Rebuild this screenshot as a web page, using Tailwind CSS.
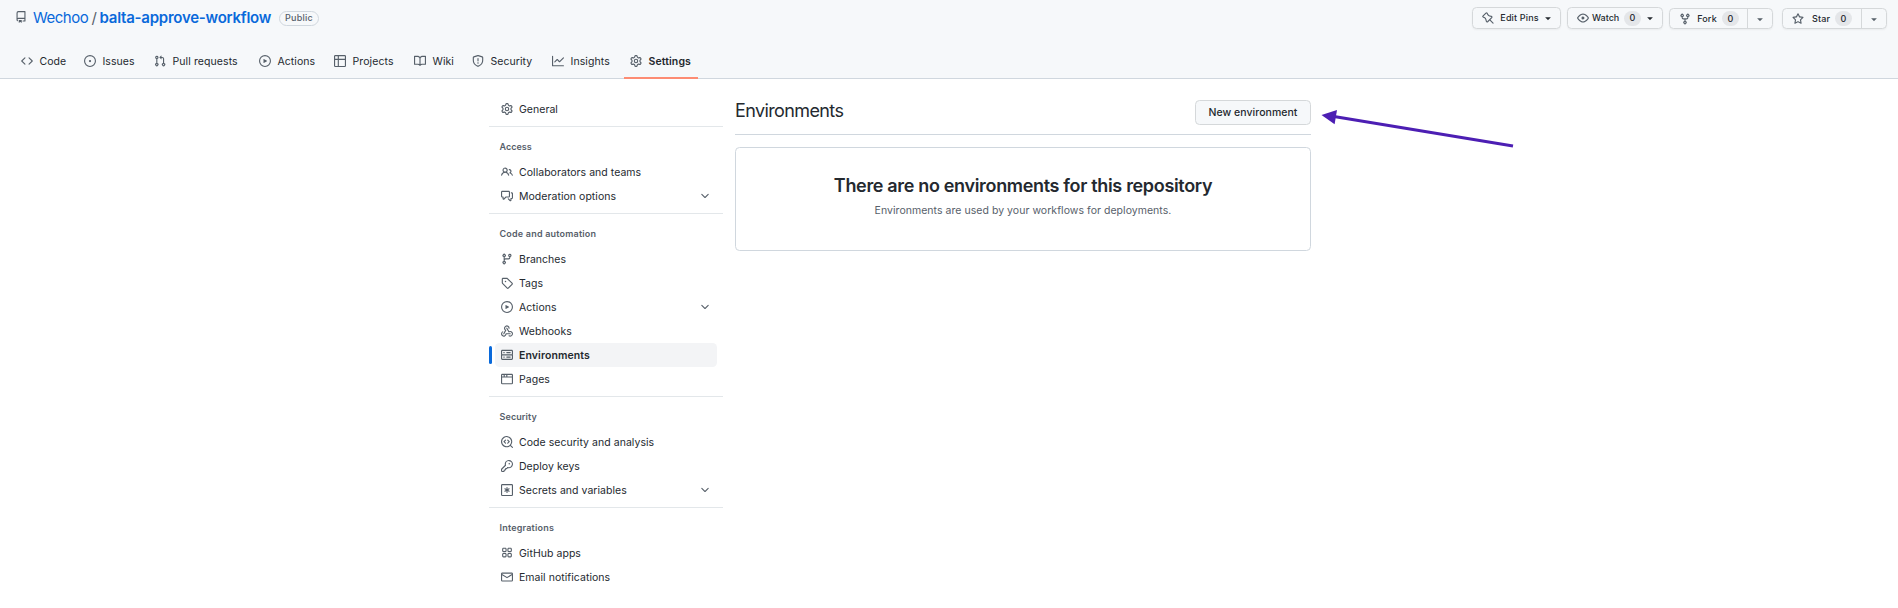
<!DOCTYPE html>
<html lang="en">
<head>
<meta charset="utf-8">
<title>Environments · Wechoo/balta-approve-workflow</title>
<script src="https://cdn.jsdelivr.net/npm/@tailwindcss/browser@4"></script>
</head>
<body class="h-[608px] overflow-hidden bg-white font-['Inter','Liberation_Sans',sans-serif] text-[10.5px] leading-4 tracking-[0.04px] text-[#24292f]">
<svg class="hidden">
  <symbol id="repo" viewBox="0 0 16 16"><path d="M2 2.5A2.5 2.5 0 0 1 4.5 0h8.75a.75.75 0 0 1 .75.75v12.5a.75.75 0 0 1-.75.75h-2.5a.75.75 0 0 1 0-1.5h1.75v-2h-8a1 1 0 0 0-.714 1.7.75.75 0 1 1-1.072 1.05A2.495 2.495 0 0 1 2 11.5Zm10.5-1h-8a1 1 0 0 0-1 1v6.708A2.486 2.486 0 0 1 4.5 9h8ZM5 12.25a.25.25 0 0 1 .25-.25h3.5a.25.25 0 0 1 .25.25v3.25a.25.25 0 0 1-.4.2l-1.45-1.087a.249.249 0 0 0-.3 0L5.4 15.7a.25.25 0 0 1-.4-.2Z"/></symbol>
  <symbol id="code" viewBox="0 0 16 16"><path d="m11.28 3.22 4.25 4.25a.75.75 0 0 1 0 1.06l-4.25 4.25a.749.749 0 0 1-1.275-.326.749.749 0 0 1 .215-.734L13.94 8l-3.72-3.72a.749.749 0 0 1 .326-1.275.749.749 0 0 1 .734.215Zm-6.56 0a.751.751 0 0 1 1.042.018.751.751 0 0 1 .018 1.042L2.06 8l3.72 3.72a.749.749 0 0 1-.326 1.275.749.749 0 0 1-.734-.215L.47 8.53a.75.75 0 0 1 0-1.06Z"/></symbol>
  <symbol id="issue" viewBox="0 0 16 16"><path d="M8 9.5a1.5 1.5 0 1 0 0-3 1.5 1.5 0 0 0 0 3Z"/><path d="M8 0a8 8 0 1 1 0 16A8 8 0 0 1 8 0ZM1.5 8a6.5 6.5 0 1 0 13 0 6.5 6.5 0 0 0-13 0Z"/></symbol>
  <symbol id="pr" viewBox="0 0 16 16"><path d="M1.5 3.25a2.25 2.25 0 1 1 3 2.122v5.256a2.251 2.251 0 1 1-1.5 0V5.372A2.25 2.25 0 0 1 1.5 3.25Zm5.677-.177L9.573.677A.25.25 0 0 1 10 .854V2.5h1A2.5 2.5 0 0 1 13.5 5v5.628a2.251 2.251 0 1 1-1.5 0V5a1 1 0 0 0-1-1h-1v1.646a.25.25 0 0 1-.427.177L7.177 3.427a.25.25 0 0 1 0-.354ZM3.75 2.5a.75.75 0 1 0 0 1.5.75.75 0 0 0 0-1.5Zm0 9.5a.75.75 0 1 0 0 1.5.75.75 0 0 0 0-1.5Zm8.25.75a.75.75 0 1 0 1.5 0 .75.75 0 0 0-1.5 0Z"/></symbol>
  <symbol id="play" viewBox="0 0 16 16"><path d="M8 0a8 8 0 1 1 0 16A8 8 0 0 1 8 0ZM1.5 8a6.5 6.5 0 1 0 13 0 6.5 6.5 0 0 0-13 0Zm4.879-2.773 4.264 2.559a.25.25 0 0 1 0 .428l-4.264 2.559A.25.25 0 0 1 6 10.559V5.442a.25.25 0 0 1 .379-.215Z"/></symbol>
  <symbol id="table" viewBox="0 0 16 16"><path d="M0 1.75C0 .784.784 0 1.75 0h12.5C15.216 0 16 .784 16 1.75v12.5A1.75 1.75 0 0 1 14.25 16H1.75A1.75 1.75 0 0 1 0 14.25ZM6.5 6.5v8h7.75a.25.25 0 0 0 .25-.25V6.5Zm8-1.5V1.75a.25.25 0 0 0-.25-.25H6.5V5Zm-13 1.5v7.75c0 .138.112.25.25.25H5v-8ZM5 5V1.5H1.75a.25.25 0 0 0-.25.25V5Z"/></symbol>
  <symbol id="book" viewBox="0 0 16 16"><path d="M0 1.75A.75.75 0 0 1 .75 1h4.253c1.227 0 2.317.59 3 1.501A3.743 3.743 0 0 1 11.006 1h4.245a.75.75 0 0 1 .75.75v10.5a.75.75 0 0 1-.75.75h-4.507a2.25 2.25 0 0 0-1.591.659l-.622.621a.75.75 0 0 1-1.06 0l-.622-.621A2.25 2.25 0 0 0 5.258 13H.75a.75.75 0 0 1-.75-.75Zm7.251 10.324.004-5.073-.002-2.253A2.25 2.25 0 0 0 5.003 2.5H1.5v9h3.757a3.75 3.75 0 0 1 1.994.574ZM8.755 4.75l-.004 7.322a3.752 3.752 0 0 1 1.992-.572H14.5v-9h-3.495a2.25 2.25 0 0 0-2.25 2.25Z"/></symbol>
  <symbol id="shield" viewBox="0 0 16 16"><path d="M7.467.133a1.748 1.748 0 0 1 1.066 0l5.25 1.68A1.75 1.75 0 0 1 15 3.48V7c0 1.566-.32 3.182-1.303 4.682-.983 1.498-2.585 2.813-5.032 3.855a1.697 1.697 0 0 1-1.33 0c-2.447-1.042-4.049-2.357-5.032-3.855C1.32 10.182 1 8.566 1 7V3.48a1.75 1.75 0 0 1 1.217-1.667Zm.61 1.429a.25.25 0 0 0-.153 0l-5.25 1.68a.25.25 0 0 0-.174.238V7c0 1.358.275 2.666 1.057 3.86.784 1.194 2.121 2.34 4.366 3.297a.196.196 0 0 0 .154 0c2.245-.956 3.582-2.104 4.366-3.298C13.225 9.666 13.5 8.36 13.5 7V3.48a.251.251 0 0 0-.174-.237l-5.25-1.68ZM8.75 4.75v3a.75.75 0 0 1-1.5 0v-3a.75.75 0 0 1 1.5 0ZM9 10.5a1 1 0 1 1-2 0 1 1 0 0 1 2 0Z"/></symbol>
  <symbol id="graph" viewBox="0 0 16 16"><path d="M1.5 1.75V13.5h13.75a.75.75 0 0 1 0 1.5H.75a.75.75 0 0 1-.75-.75V1.75a.75.75 0 0 1 1.5 0Zm14.28 2.53-5.25 5.25a.75.75 0 0 1-1.06 0L7 7.06 4.28 9.78a.751.751 0 0 1-1.042-.018.751.751 0 0 1-.018-1.042l3.25-3.25a.75.75 0 0 1 1.06 0L10 7.94l4.72-4.72a.751.751 0 0 1 1.042.018.751.751 0 0 1 .018 1.042Z"/></symbol>
  <symbol id="gear" viewBox="0 0 16 16"><path d="M8 0a8.2 8.2 0 0 1 .701.031C9.444.095 9.99.645 10.16 1.29l.288 1.107c.018.066.079.158.212.224.231.114.454.243.668.386.123.082.233.09.299.071l1.103-.303c.644-.176 1.392.021 1.82.63.27.385.506.792.704 1.218.315.675.111 1.422-.364 1.891l-.814.806c-.049.048-.098.147-.088.294.016.257.016.515 0 .772-.01.147.038.246.088.294l.814.806c.475.469.679 1.216.364 1.891a7.977 7.977 0 0 1-.704 1.217c-.428.61-1.176.807-1.82.63l-1.102-.302c-.067-.019-.177-.011-.3.071a5.909 5.909 0 0 1-.668.386c-.133.066-.194.158-.211.224l-.29 1.106c-.168.646-.715 1.196-1.458 1.26a8.006 8.006 0 0 1-1.402 0c-.743-.064-1.289-.614-1.458-1.26l-.289-1.106c-.018-.066-.079-.158-.212-.224a5.738 5.738 0 0 1-.668-.386c-.123-.082-.233-.09-.299-.071l-1.103.303c-.644.176-1.392-.021-1.82-.63a8.12 8.12 0 0 1-.704-1.218c-.315-.675-.111-1.422.363-1.891l.815-.806c.05-.048.098-.147.088-.294a6.214 6.214 0 0 1 0-.772c.01-.147-.038-.246-.088-.294l-.815-.806C.635 6.045.431 5.298.746 4.623a7.92 7.92 0 0 1 .704-1.217c.428-.61 1.176-.807 1.82-.63l1.102.302c.067.019.177.011.3-.071.214-.143.437-.272.668-.386.133-.066.194-.158.211-.224l.29-1.106C6.009.645 6.556.095 7.299.03 7.53.01 7.764 0 8 0Zm-.571 1.525c-.036.003-.108.036-.137.146l-.289 1.105c-.147.561-.549.967-.998 1.189-.173.086-.34.183-.5.29-.417.278-.97.423-1.529.27l-1.103-.303c-.109-.03-.175.016-.195.045-.22.312-.412.644-.573.99-.014.031-.021.11.059.19l.815.806c.411.406.562.957.53 1.456a4.709 4.709 0 0 0 0 .582c.032.499-.119 1.05-.53 1.456l-.815.806c-.081.08-.073.159-.059.19.162.346.353.677.573.989.02.03.085.076.195.046l1.102-.303c.56-.153 1.113-.008 1.53.27.161.107.328.204.501.29.447.222.85.629.997 1.189l.289 1.105c.029.109.101.143.137.146a6.6 6.6 0 0 0 1.142 0c.036-.003.108-.036.137-.146l.289-1.105c.147-.561.549-.967.998-1.189.173-.086.34-.183.5-.29.417-.278.97-.423 1.529-.27l1.103.303c.109.029.175-.016.195-.045.22-.313.411-.644.573-.99.014-.031.021-.11-.059-.19l-.815-.806c-.411-.406-.562-.957-.53-1.456a4.709 4.709 0 0 0 0-.582c-.032-.499.119-1.05.53-1.456l.815-.806c.081-.08.073-.159.059-.19a6.464 6.464 0 0 0-.573-.989c-.02-.03-.085-.076-.195-.046l-1.102.303c-.56.153-1.113.008-1.53-.27a4.44 4.44 0 0 0-.501-.29c-.447-.222-.85-.629-.997-1.189l-.289-1.105c-.029-.11-.101-.143-.137-.146a6.6 6.6 0 0 0-1.142 0ZM11 8a3 3 0 1 1-6 0 3 3 0 0 1 6 0ZM9.5 8a1.5 1.5 0 1 0-3.001.001A1.5 1.5 0 0 0 9.5 8Z"/></symbol>
  <symbol id="pin" viewBox="0 0 16 16"><path d="m11.294.984 3.722 3.722a1.75 1.75 0 0 1-.504 2.826l-1.327.613a3.089 3.089 0 0 0-1.707 2.084l-.584 2.454c-.317 1.332-1.972 1.8-2.94.832L5.75 11.311 1.78 15.28a.749.749 0 1 1-1.06-1.06l3.969-3.97-2.204-2.204c-.968-.968-.5-2.623.832-2.94l2.454-.584a3.08 3.08 0 0 0 2.084-1.707l.613-1.327a1.75 1.75 0 0 1 2.826-.504ZM6.283 9.723l2.732 2.731a.25.25 0 0 0 .42-.119l.584-2.454a4.586 4.586 0 0 1 2.537-3.098l1.328-.613a.25.25 0 0 0 .072-.404l-3.722-3.722a.25.25 0 0 0-.404.072l-.613 1.328a4.584 4.584 0 0 1-3.098 2.537l-2.454.584a.25.25 0 0 0-.119.42l2.731 2.732Z"/></symbol>
  <symbol id="eye" viewBox="0 0 16 16"><path d="M8 2c1.981 0 3.671.992 4.933 2.078 1.27 1.091 2.187 2.345 2.637 3.023a1.62 1.62 0 0 1 0 1.798c-.45.678-1.367 1.932-2.637 3.023C11.67 13.008 9.981 14 8 14c-1.981 0-3.671-.992-4.933-2.078C1.797 10.83.88 9.576.43 8.898a1.62 1.62 0 0 1 0-1.798c.45-.677 1.367-1.931 2.637-3.022C4.33 2.992 6.019 2 8 2ZM1.679 7.932a.12.12 0 0 0 0 .136c.411.622 1.241 1.75 2.366 2.717C5.176 11.758 6.527 12.5 8 12.5c1.473 0 2.825-.742 3.955-1.715 1.124-.967 1.954-2.096 2.366-2.717a.12.12 0 0 0 0-.136c-.412-.621-1.242-1.75-2.366-2.717C10.824 4.242 9.473 3.5 8 3.5c-1.473 0-2.825.742-3.955 1.715-1.124.967-1.954 2.096-2.366 2.717ZM8 10a2 2 0 1 1-.001-3.999A2 2 0 0 1 8 10Z"/></symbol>
  <symbol id="fork" viewBox="0 0 16 16"><path d="M5 5.372v.878c0 .414.336.75.75.75h4.5a.75.75 0 0 0 .75-.75v-.878a2.25 2.25 0 1 1 1.5 0v.878a2.25 2.25 0 0 1-2.25 2.25h-1.5v2.128a2.251 2.251 0 1 1-1.5 0V8.5h-1.5A2.25 2.25 0 0 1 3.5 6.25v-.878a2.25 2.25 0 1 1 1.5 0ZM5 3.25a.75.75 0 1 0-1.5 0 .75.75 0 0 0 1.5 0Zm6.75.75a.75.75 0 1 0 0-1.5.75.75 0 0 0 0 1.5Zm-3 8.75a.75.75 0 1 0-1.5 0 .75.75 0 0 0 1.5 0Z"/></symbol>
  <symbol id="star" viewBox="0 0 16 16"><path d="M8 .25a.75.75 0 0 1 .673.418l1.882 3.815 4.21.612a.75.75 0 0 1 .416 1.279l-3.046 2.97.719 4.192a.751.751 0 0 1-1.088.791L8 12.347l-3.766 1.98a.75.75 0 0 1-1.088-.79l.72-4.194L.818 6.374a.75.75 0 0 1 .416-1.28l4.21-.611L7.327.668A.75.75 0 0 1 8 .25Zm0 2.445L6.615 5.5a.75.75 0 0 1-.564.41l-3.097.45 2.24 2.184a.75.75 0 0 1 .216.664l-.528 3.084 2.769-1.456a.75.75 0 0 1 .698 0l2.77 1.456-.53-3.084a.75.75 0 0 1 .216-.664l2.24-2.183-3.096-.45a.75.75 0 0 1-.564-.41L8 2.694Z"/></symbol>
  <symbol id="caret" viewBox="0 0 16 16"><path d="m4.427 7.427 3.396 3.396a.25.25 0 0 0 .354 0l3.396-3.396A.25.25 0 0 0 11.396 7H4.604a.25.25 0 0 0-.177.427Z"/></symbol>
  <symbol id="people" viewBox="0 0 16 16"><path d="M2 5.5a3.5 3.5 0 1 1 5.898 2.549 5.508 5.508 0 0 1 3.034 4.084.75.75 0 1 1-1.482.235 4 4 0 0 0-7.9 0 .75.75 0 0 1-1.482-.236A5.507 5.507 0 0 1 3.102 8.05 3.493 3.493 0 0 1 2 5.5ZM11 4a3.001 3.001 0 0 1 2.22 5.018 5.01 5.01 0 0 1 2.56 3.012.749.749 0 0 1-.885.954.752.752 0 0 1-.549-.514 3.507 3.507 0 0 0-2.522-2.372.75.75 0 0 1-.574-.73v-.352a.75.75 0 0 1 .416-.672A1.5 1.5 0 0 0 11 5.5.75.75 0 0 1 11 4Zm-5.5-.5a2 2 0 1 0-.001 3.999A2 2 0 0 0 5.5 3.5Z"/></symbol>
  <symbol id="discuss" viewBox="0 0 16 16"><path d="M1.75 1h8.5c.966 0 1.75.784 1.75 1.75v5.5A1.75 1.75 0 0 1 10.25 10H7.061l-2.574 2.573A1.458 1.458 0 0 1 2 11.543V10h-.25A1.75 1.75 0 0 1 0 8.25v-5.5C0 1.784.784 1 1.75 1ZM1.5 2.75v5.5c0 .138.112.25.25.25h1a.75.75 0 0 1 .75.75v2.19l2.72-2.72a.749.749 0 0 1 .53-.22h3.5a.25.25 0 0 0 .25-.25v-5.5a.25.25 0 0 0-.25-.25h-8.5a.25.25 0 0 0-.25.25Zm13 2a.25.25 0 0 0-.25-.25h-.5a.75.75 0 0 1 0-1.5h.5c.966 0 1.75.784 1.75 1.75v5.5A1.75 1.75 0 0 1 14.25 12H14v1.543a1.458 1.458 0 0 1-2.487 1.03L9.22 12.28a.749.749 0 0 1 .326-1.275.749.749 0 0 1 .734.215l2.22 2.22v-2.19a.75.75 0 0 1 .75-.75h1a.25.25 0 0 0 .25-.25Z"/></symbol>
  <symbol id="chev" viewBox="0 0 16 16"><path d="M12.78 5.22a.749.749 0 0 1 0 1.06l-4.25 4.25a.749.749 0 0 1-1.06 0L3.22 6.28a.749.749 0 1 1 1.06-1.06L8 8.939l3.72-3.719a.749.749 0 0 1 1.06 0Z"/></symbol>
  <symbol id="branch" viewBox="0 0 16 16"><path d="M9.5 3.25a2.25 2.25 0 1 1 3 2.122V6A2.5 2.5 0 0 1 10 8.5H6a1 1 0 0 0-1 1v1.128a2.251 2.251 0 1 1-1.5 0V5.372a2.25 2.25 0 1 1 1.5 0v1.836A2.493 2.493 0 0 1 6 7h4a1 1 0 0 0 1-1v-.628A2.25 2.25 0 0 1 9.5 3.25Zm-6 0a.75.75 0 1 0 1.5 0 .75.75 0 0 0-1.5 0Zm8.25-.75a.75.75 0 1 0 0 1.5.75.75 0 0 0 0-1.5ZM4.25 12a.75.75 0 1 0 0 1.5.75.75 0 0 0 0-1.5Z"/></symbol>
  <symbol id="tag" viewBox="0 0 16 16"><path d="M1 7.775V2.75C1 1.784 1.784 1 2.75 1h5.025c.464 0 .91.184 1.238.513l6.25 6.25a1.75 1.75 0 0 1 0 2.474l-5.026 5.026a1.75 1.75 0 0 1-2.474 0l-6.25-6.25A1.752 1.752 0 0 1 1 7.775Zm1.5 0c0 .066.026.13.073.177l6.25 6.25a.25.25 0 0 0 .354 0l5.025-5.025a.25.25 0 0 0 0-.354l-6.25-6.25a.25.25 0 0 0-.177-.073H2.75a.25.25 0 0 0-.25.25ZM6 5a1 1 0 1 1 0 2 1 1 0 0 1 0-2Z"/></symbol>
  <symbol id="webhook" viewBox="0 0 16 16"><path d="M5.5 4.25a2.25 2.25 0 0 1 4.5 0 .75.75 0 0 0 1.5 0 3.75 3.75 0 1 0-6.14 2.889l-2.272 4.258a.75.75 0 0 0 1.324.706L7 7.25a.75.75 0 0 0-.309-1.015A2.25 2.25 0 0 1 5.5 4.25Z"/><path d="M7.364 3.607a.75.75 0 0 1 1.03.257l2.608 4.349a3.75 3.75 0 1 1-.628 6.785.75.75 0 0 1 .752-1.299 2.25 2.25 0 1 0-.033-3.88.75.75 0 0 1-1.03-.256L7.107 4.636a.75.75 0 0 1 .257-1.03Z"/><path d="M2.9 8.776A.75.75 0 0 1 2.625 9.8 2.25 2.25 0 1 0 6 11.75a.75.75 0 0 1 .75-.751h5.5a.75.75 0 0 1 0 1.5H7.425a3.751 3.751 0 1 1-5.55-3.998.75.75 0 0 1 1.024.274Z"/></symbol>
  <symbol id="server" viewBox="0 0 16 16"><path d="M1.75 1h12.5c.966 0 1.75.784 1.75 1.75v4c0 .372-.116.717-.314 1 .198.283.314.628.314 1v4a1.75 1.75 0 0 1-1.75 1.75H1.75A1.75 1.75 0 0 1 0 12.75v-4c0-.358.109-.707.314-1a1.739 1.739 0 0 1-.314-1v-4C0 1.784.784 1 1.75 1ZM1.5 2.75v4c0 .138.112.25.25.25h12.5a.25.25 0 0 0 .25-.25v-4a.25.25 0 0 0-.25-.25H1.75a.25.25 0 0 0-.25.25Zm.25 5.75a.25.25 0 0 0-.25.25v4c0 .138.112.25.25.25h12.5a.25.25 0 0 0 .25-.25v-4a.25.25 0 0 0-.25-.25ZM7 4.75A.75.75 0 0 1 7.75 4h4.5a.75.75 0 0 1 0 1.5h-4.5A.75.75 0 0 1 7 4.75ZM7.75 10h4.5a.75.75 0 0 1 0 1.5h-4.5a.75.75 0 0 1 0-1.5ZM3 4.75A.75.75 0 0 1 3.75 4h.5a.75.75 0 0 1 0 1.5h-.5A.75.75 0 0 1 3 4.75ZM3.75 10h.5a.75.75 0 0 1 0 1.5h-.5a.75.75 0 0 1 0-1.5Z"/></symbol>
  <symbol id="browser" viewBox="0 0 16 16"><path d="M0 2.75C0 1.784.784 1 1.75 1h12.5c.966 0 1.75.784 1.75 1.75v10.5A1.75 1.75 0 0 1 14.25 15H1.75A1.75 1.75 0 0 1 0 13.25ZM14.5 6h-13v7.25c0 .138.112.25.25.25h12.5a.25.25 0 0 0 .25-.25Zm-6-3.5v2h6V2.75a.25.25 0 0 0-.25-.25ZM5 2.5v2h2v-2Zm-3.25 0a.25.25 0 0 0-.25.25V4.5h2v-2Z"/></symbol>
  <symbol id="scan" viewBox="0 0 16 16"><path d="M8.47 4.97a.75.75 0 0 0 0 1.06L9.94 7.5 8.47 8.97a.75.75 0 1 0 1.06 1.06l2-2a.75.75 0 0 0 0-1.06l-2-2a.75.75 0 0 0-1.06 0ZM6.53 6.03a.75.75 0 0 0-1.06-1.06l-2 2a.75.75 0 0 0 0 1.06l2 2a.75.75 0 1 0 1.06-1.06L5.06 7.5Z"/><path d="M12.246 13.307a7.501 7.501 0 1 1 1.06-1.06l2.474 2.473a.749.749 0 1 1-1.06 1.06ZM1.5 7.5a6.002 6.002 0 0 0 3.608 5.504 6.002 6.002 0 0 0 6.486-1.117.748.748 0 0 1 .292-.293A6 6 0 1 0 1.5 7.5Z"/></symbol>
  <symbol id="key" viewBox="0 0 16 16"><path d="M10.5 0a5.499 5.499 0 1 1-1.288 10.848l-.932.932a.749.749 0 0 1-.53.22H7v.75a.749.749 0 0 1-.22.53l-.5.5a.749.749 0 0 1-.53.22H5v.75a.749.749 0 0 1-.22.53l-.5.5a.749.749 0 0 1-.53.22h-2A1.75 1.75 0 0 1 0 14.25v-2c0-.199.079-.389.22-.53l4.932-4.932A5.5 5.5 0 0 1 10.5 0Zm-4 5.5c-.001.431.069.86.205 1.269a.75.75 0 0 1-.181.768L1.5 12.56v1.69c0 .138.112.25.25.25h1.69l.06-.06v-1.19a.75.75 0 0 1 .75-.75h1.19l.06-.06v-1.19a.75.75 0 0 1 .75-.75h1.19l1.023-1.025a.75.75 0 0 1 .768-.18A4 4 0 1 0 6.5 5.5ZM11 6a1 1 0 1 1 0-2 1 1 0 0 1 0 2Z"/></symbol>
  <symbol id="asterisk" viewBox="0 0 16 16"><path d="M1.75 0h12.5C15.216 0 16 .784 16 1.75v12.5A1.75 1.75 0 0 1 14.25 16H1.75A1.75 1.75 0 0 1 0 14.25V1.75C0 .784.784 0 1.75 0ZM1.5 1.75v12.5c0 .138.112.25.25.25h12.5a.25.25 0 0 0 .25-.25V1.75a.25.25 0 0 0-.25-.25H1.75a.25.25 0 0 0-.25.25Z"/><path d="M8 4a.75.75 0 0 1 .75.75V6.7l1.69-.975a.75.75 0 0 1 .75 1.3L9.5 8l1.69.976a.75.75 0 0 1-.75 1.298L8.75 9.3v1.951a.75.75 0 0 1-1.5 0V9.299l-1.69.976a.75.75 0 0 1-.75-1.3L6.5 8l-1.69-.975a.75.75 0 0 1 .75-1.3l1.69.976V4.75A.75.75 0 0 1 8 4Z"/></symbol>
  <symbol id="apps" viewBox="0 0 16 16"><path d="M1.5 3.25c0-.966.784-1.75 1.75-1.75h2.5c.966 0 1.75.784 1.75 1.75v2.5A1.75 1.75 0 0 1 5.75 7.5h-2.5A1.75 1.75 0 0 1 1.5 5.75Zm7 0c0-.966.784-1.75 1.75-1.75h2.5c.966 0 1.75.784 1.75 1.75v2.5a1.75 1.75 0 0 1-1.75 1.75h-2.5A1.75 1.75 0 0 1 8.5 5.75Zm-7 7c0-.966.784-1.75 1.75-1.75h2.5c.966 0 1.75.784 1.75 1.75v2.5a1.75 1.75 0 0 1-1.75 1.75h-2.5a1.75 1.75 0 0 1-1.75-1.75Zm7 0c0-.966.784-1.75 1.75-1.75h2.5c.966 0 1.75.784 1.75 1.75v2.5a1.75 1.75 0 0 1-1.75 1.75h-2.5a1.75 1.75 0 0 1-1.75-1.75ZM3.25 3a.25.25 0 0 0-.25.25v2.5c0 .138.112.25.25.25h2.5A.25.25 0 0 0 6 5.75v-2.5A.25.25 0 0 0 5.75 3Zm7 0a.25.25 0 0 0-.25.25v2.5c0 .138.112.25.25.25h2.5a.25.25 0 0 0 .25-.25v-2.5a.25.25 0 0 0-.25-.25Zm-7 7a.25.25 0 0 0-.25.25v2.5c0 .138.112.25.25.25h2.5a.25.25 0 0 0 .25-.25v-2.5a.25.25 0 0 0-.25-.25Zm7 0a.25.25 0 0 0-.25.25v2.5c0 .138.112.25.25.25h2.5a.25.25 0 0 0 .25-.25v-2.5a.25.25 0 0 0-.25-.25Z" transform="translate(0 -.6)"/></symbol>
  <symbol id="mail" viewBox="0 0 16 16"><path d="M1.75 2h12.5c.966 0 1.75.784 1.75 1.75v8.5A1.75 1.75 0 0 1 14.25 14H1.75A1.75 1.75 0 0 1 0 12.25v-8.5C0 2.784.784 2 1.75 2ZM1.5 12.251c0 .138.112.25.25.25h12.5a.25.25 0 0 0 .25-.25V5.809L8.38 9.397a.75.75 0 0 1-.76 0L1.5 5.809v6.442Zm13-8.181v-.32a.25.25 0 0 0-.25-.25H1.75a.25.25 0 0 0-.25.25v.32L8 7.88Z"/></symbol>
</svg>

<header class="flex h-[79px] flex-col justify-between border-b border-[#d0d7de] bg-[#f6f8fa]">
  <div class="flex justify-between pt-[7px] pr-[11px] pl-[15px]">
    <div class="flex h-[22px] items-center text-[15px] leading-[22px] text-[#0969da]">
      <svg class="mr-[6px] mb-[2px] size-3 fill-[#57606a]"><use href="#repo"/></svg>
      <a class="w-[58.5px] tracking-[-0.5px]">Wechoo</a>
      <span class="w-[8px] text-[#57606a]">/</span>
      <a class="w-[179.5px] font-semibold tracking-[-0.24px]">balta-approve-workflow</a>
      <span class="flex h-[15px] w-[40px] items-center justify-center rounded-full border border-[#d0d7de] text-[9px] font-medium tracking-[0.25px] text-[#57606a]">Public</span>
    </div>
    <div class="flex text-[9px] font-medium tracking-[0.15px]">
      <button class="mr-[6px] flex h-[22px] w-[89px] items-center rounded-[4.5px] border border-[#d5d8da] pl-[9px] shadow-xs"><svg class="mr-[6px] size-3 -scale-x-100 fill-[#57606a]"><use href="#pin"/></svg><span class="w-[39px] whitespace-nowrap">Edit Pins</span><svg class="ml-[3px] size-3 fill-[#24292f]"><use href="#caret"/></svg></button>
      <button class="mr-[6px] flex h-[22px] w-[96px] items-center rounded-[4.5px] border border-[#d5d8da] pl-[9px] shadow-xs"><svg class="mr-[3px] size-3 fill-[#57606a]"><use href="#eye"/></svg><span class="w-[27px] tracking-[0]">Watch</span><span class="ml-[5px] flex h-[15px] w-[17px] items-center justify-center rounded-full bg-[#e4e6e9]">0</span><svg class="ml-[3px] size-3 fill-[#24292f]"><use href="#caret"/></svg></button>
      <div class="mt-px mr-[9px] flex h-[21px] w-[104px] rounded-[4.5px] border border-[#d5d8da] shadow-xs"><button class="flex w-[78px] items-center border-r border-[#d5d8da] pl-[9px]"><svg class="mr-[6px] size-3 fill-[#57606a]"><use href="#fork"/></svg><span class="w-[20px]">Fork</span><span class="ml-[5px] flex h-[15px] w-[17px] items-center justify-center rounded-full bg-[#e4e6e9]">0</span></button><button class="flex flex-1 items-center justify-center"><svg class="size-3 fill-[#57606a]"><use href="#caret"/></svg></button></div>
      <div class="mt-px flex h-[21px] w-[105px] rounded-[4.5px] border border-[#d5d8da] shadow-xs"><button class="flex w-[79px] items-center border-r border-[#d5d8da] pl-[9px]"><svg class="mr-[8px] size-3 fill-[#57606a]"><use href="#star"/></svg><span class="w-[18px]">Star</span><span class="ml-[5px] flex h-[15px] w-[17px] items-center justify-center rounded-full bg-[#e4e6e9]">0</span></button><button class="flex flex-1 items-center justify-center"><svg class="size-3 fill-[#57606a]"><use href="#caret"/></svg></button></div>
    </div>
  </div>
  <nav class="-mb-px flex h-[35px] pl-[21px] [&_a]:flex [&_a]:h-[34px] [&_a]:items-center [&_a]:gap-[6.5px] [&_span]:pt-[2px] [&_svg]:size-3 [&_svg]:fill-[#57606a]">
    <a class="w-[63px]"><svg><use href="#code"/></svg><span>Code</span></a>
    <a class="w-[70px]"><svg><use href="#issue"/></svg><span>Issues</span></a>
    <a class="w-[105px]"><svg><use href="#pr"/></svg><span class="tracking-[0.09px]">Pull requests</span></a>
    <a class="w-[75px]"><svg><use href="#play"/></svg><span>Actions</span></a>
    <a class="w-[80px]"><svg><use href="#table"/></svg><span class="tracking-[0.09px]">Projects</span></a>
    <a class="w-[58px]"><svg><use href="#book"/></svg><span>Wiki</span></a>
    <a class="w-[80px]"><svg><use href="#shield"/></svg><span>Security</span></a>
    <a class="w-[72px]"><svg><use href="#graph"/></svg><span class="tracking-[0.1px]">Insights</span></a>
    <a class="h-[35px]! w-[74px] border-b-2 border-[#fd8c73] pt-px pl-[6px] font-semibold tracking-[0.1px]"><svg><use href="#gear"/></svg><span>Settings</span></a>
  </nav>
</header>

<div class="flex">
  <aside class="ml-[489px] w-[234px] pt-[18px] [&_h3]:flex [&_h3]:h-[33px] [&_h3]:items-center [&_h3]:pt-[6px] [&_h3]:pl-[10.5px] [&_h3]:text-[9px] [&_h3]:font-semibold [&_h3]:tracking-[0.2px] [&_h3]:text-[#57606a] [&_hr]:border-[#e3e7ea] [&_li]:relative [&_li]:mx-[6px] [&_li]:flex [&_li]:h-6 [&_li]:items-center [&_li]:gap-[6px] [&_li]:rounded-[4.5px] [&_li]:px-[6px] [&_li>span]:pt-[2px] [&_svg]:size-3 [&_svg]:fill-[#57606a] [&_ul]:mb-[5px]">
    <ul><li><svg><use href="#gear"/></svg><span>General</span></li></ul>
    <hr>
    <h3 class="tracking-[0]!">Access</h3>
    <ul>
      <li><svg><use href="#people"/></svg><span>Collaborators and teams</span></li>
      <li><svg><use href="#discuss"/></svg><span>Moderation options</span><svg class="ml-auto"><use href="#chev"/></svg></li>
    </ul>
    <hr>
    <h3>Code and automation</h3>
    <ul>
      <li><svg><use href="#branch"/></svg><span>Branches</span></li>
      <li><svg><use href="#tag"/></svg><span>Tags</span></li>
      <li><svg><use href="#play"/></svg><span>Actions</span><svg class="ml-auto"><use href="#chev"/></svg></li>
      <li><svg><use href="#webhook"/></svg><span>Webhooks</span></li>
      <li class="bg-[#f3f4f6] font-semibold"><i class="absolute top-[3px] -left-[6px] h-[18px] w-[3px] rounded-[4px] bg-[#0969da]"></i><svg><use href="#server"/></svg><span class="tracking-[0.1px]">Environments</span></li>
      <li><svg><use href="#browser"/></svg><span>Pages</span></li>
    </ul>
    <hr>
    <h3 class="tracking-[0.1px]!">Security</h3>
    <ul>
      <li><svg><use href="#scan"/></svg><span>Code security and analysis</span></li>
      <li><svg><use href="#key"/></svg><span>Deploy keys</span></li>
      <li><svg><use href="#asterisk"/></svg><span>Secrets and variables</span><svg class="ml-auto"><use href="#chev"/></svg></li>
    </ul>
    <hr>
    <h3>Integrations</h3>
    <ul>
      <li><svg><use href="#apps"/></svg><span>GitHub apps</span></li>
      <li><svg><use href="#mail"/></svg><span>Email notifications</span></li>
    </ul>
  </aside>
  <main class="ml-3 w-[576px] pt-[21px]">
    <div class="flex h-[35px] items-start justify-between border-b border-[#d0d7de]">
      <h1 class="text-[18px] leading-[22px] tracking-[-0.61px]">Environments</h1>
      <button class="flex h-[25px] w-[116px] items-center justify-center rounded-[4.5px] border border-[#d5d8da] bg-[#f6f8fa] font-medium">New environment</button>
    </div>
    <section class="mt-3 flex h-[104px] flex-col items-center rounded-[4.5px] border border-[#d0d7de] pt-[26px]">
      <h2 class="text-[18px] leading-6 font-semibold tracking-[-0.33px]">There are no environments for this repository</h2>
      <p class="mt-[5px] text-[#57606a]">Environments are used by your workflows for deployments.</p>
    </section>
  </main>
  <svg class="mt-[28px] ml-[9px] h-[44px] w-[200px]" viewBox="1320 107 200 44"><path d="M1334 116.5 1513 146" stroke="#4c1eb3" stroke-width="3"/><path d="M1321.5 115 1337 110 1334.6 124.3Z" fill="#4c1eb3"/></svg>
</div>
</body>
</html>
